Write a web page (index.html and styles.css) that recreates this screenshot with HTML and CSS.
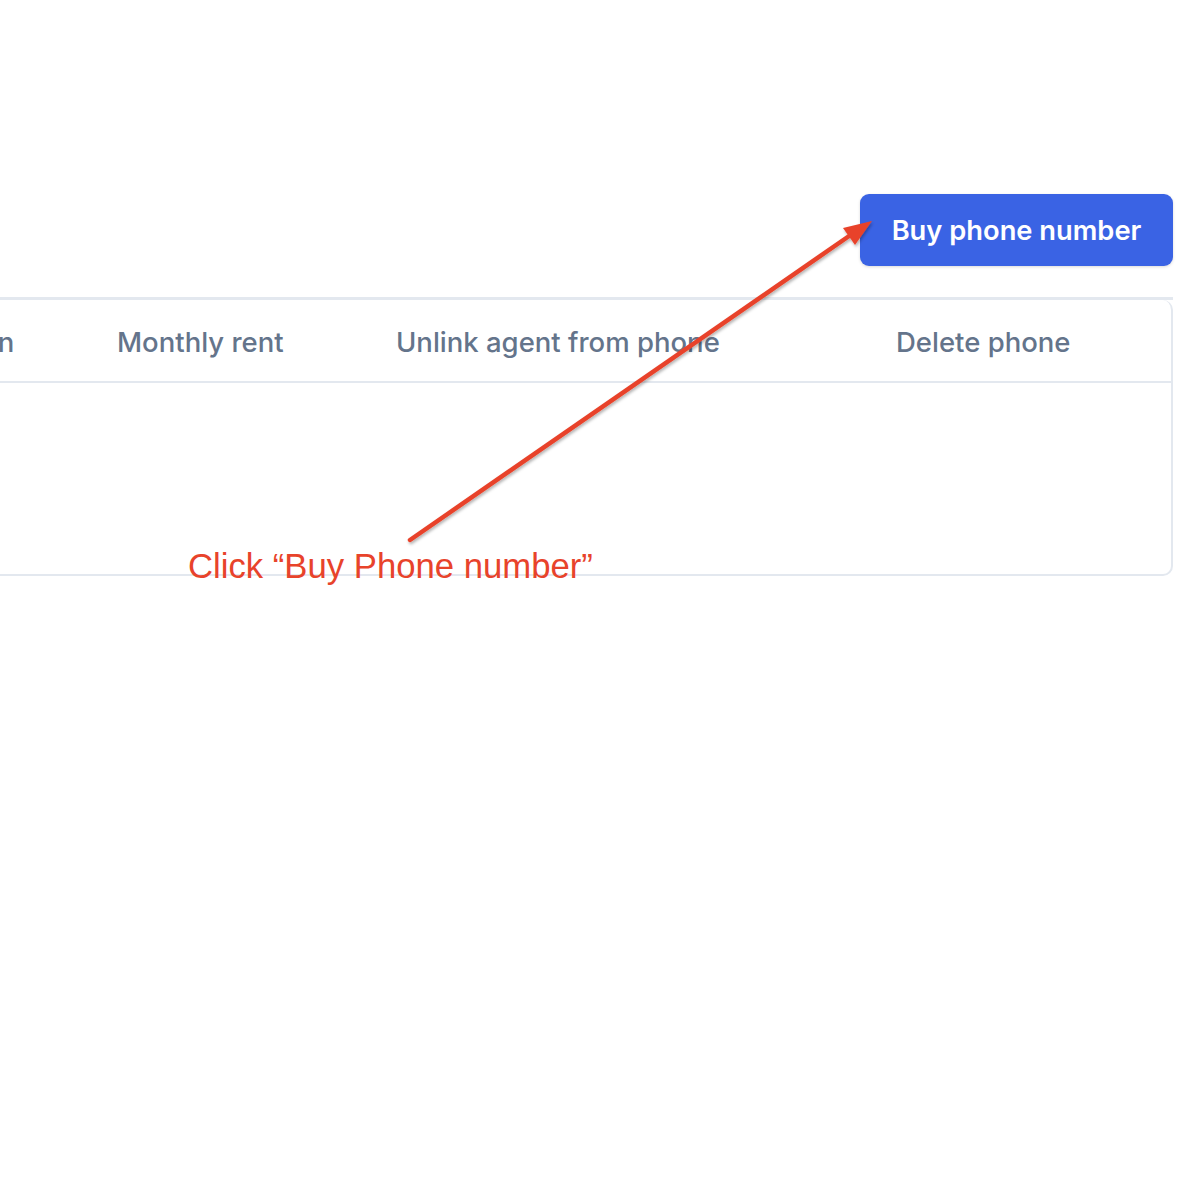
FILE: index.html
```html
<!DOCTYPE html>
<html lang="en">
<head>
    <meta charset="UTF-8">
    <title>Phone numbers</title>
    <link rel="stylesheet" href="styles.css">
</head>
<body>
    <div class="page">
        <div class="toolbar">
            <button class="buy-btn">Buy phone number</button>
        </div>
        <div class="divider"></div>
        <div class="card">
            <div class="row head">
                <div class="cell">Location</div>
                <div class="cell">Monthly rent</div>
                <div class="cell">Unlink agent from phone</div>
                <div class="cell">Delete phone</div>
            </div>
            <div class="empty"></div>
        </div>
    </div>

    <svg class="annotation" width="1200" height="1200" viewBox="0 0 1200 1200">
        <defs>
            <filter id="shadow" x="-10%" y="-10%" width="120%" height="120%">
                <feDropShadow dx="1" dy="2" stdDeviation="1.5" flood-color="#000" flood-opacity="0.3"/>
            </filter>
        </defs>
        <g filter="url(#shadow)">
            <line x1="410" y1="540" x2="852" y2="234" stroke="#e8432b" stroke-width="4.5" stroke-linecap="round"/>
            <polygon points="872,221 855,245 843,228" fill="#e8432b"/>
        </g>
    </svg>
    <div class="callout">Click “Buy Phone number”</div>
</body>
</html>
```

FILE: styles.css
```css
body {
    margin: 0;
    font-family: Inter, "Noto Sans", sans-serif;
    background: #fff;
    overflow: hidden;
}

.page {
    padding: 194px 27px 0 0;
}

.toolbar {
    display: flex;
    justify-content: flex-end;
}

.buy-btn {
    background-color: #3a63e4;
    color: #fff;
    border: none;
    border-radius: 9px;
    width: 313px;
    height: 72px;
    font-family: Inter, sans-serif;
    font-size: 27.3px;
    font-weight: 600;
    box-shadow: 0 1px 3px rgba(0, 0, 0, 0.15);
}

.divider {
    margin-top: 31px;
    height: 3px;
    background: #e3e8ef;
}

.card {
    margin-left: -133px;
    border: 2px solid #e3e8ef;
    border-top: none;
    border-radius: 0 10px 10px 10px;
}

.row {
    display: grid;
    grid-template-columns: 216px 279px 500px 1fr;
}

.head {
    height: 81px;
    align-items: center;
    border-bottom: 2px solid #e3e8ef;
}

.cell {
    padding-left: 32px;
    padding-top: 3px;
    font-size: 27.5px;
    font-weight: 500;
    color: #64748b;
    white-space: nowrap;
}

.empty {
    height: 191px;
}

.annotation {
    position: absolute;
    top: 0;
    left: 0;
    pointer-events: none;
}

.callout {
    position: absolute;
    left: 188px;
    top: 547px;
    font-family: "Liberation Sans", Arial, sans-serif;
    font-size: 34.7px;
    color: #e8432b;
    white-space: nowrap;
}
```
